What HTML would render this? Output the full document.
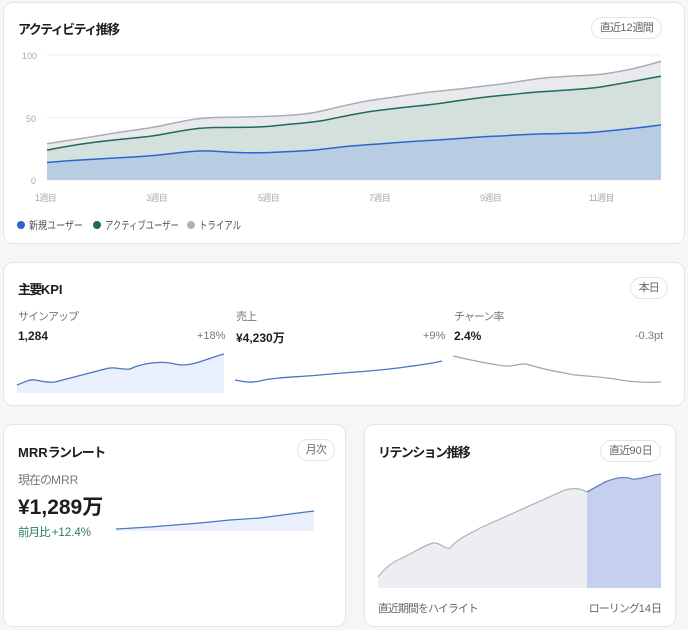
<!DOCTYPE html>
<html><head><meta charset="utf-8"><style>
*{box-sizing:border-box;margin:0;padding:0}
body{width:688px;height:630px;background:#f6f6f7;font-family:"Liberation Sans","Noto Sans CJK JP",sans-serif;color:#1d1d1f;position:relative;overflow:hidden}
.card{position:absolute;background:#fff;border:1px solid #e6e6ea;border-radius:10px}
.t{position:absolute;font-size:13px;font-weight:bold;color:#1d1d1f;letter-spacing:-1.6px;white-space:nowrap}
.pill{position:absolute;border:1px solid #e4e4e8;border-radius:11px;font-size:11px;color:#666;height:22px;line-height:20px;padding:0 8px;background:#fff;letter-spacing:-0.8px;white-space:nowrap}
.s{position:absolute;font-size:11px;color:#777;letter-spacing:-1px;white-space:nowrap}
.v{position:absolute;font-size:12px;font-weight:bold;white-space:nowrap}
.l{letter-spacing:0}
svg{position:absolute}
</style></head><body>
<div class="card" style="left:3px;top:2px;width:682px;height:242px">
<div class="t" style="left:14px;top:16px">アクティビティ推移</div>
<div class="pill" style="right:22px;top:14px">直近<span class="l">12</span>週間</div>
</div>
<svg style="left:0;top:0" width="688" height="240">
<g font-size="9" fill="#aaa" font-family="Liberation Sans,Noto Sans CJK JP,sans-serif">
<line x1="47" y1="55" x2="661" y2="55" stroke="#eee"/><line x1="47" y1="117.5" x2="661" y2="117.5" stroke="#eee"/><line x1="47" y1="180" x2="661" y2="180" stroke="#eee"/>
<text x="22" y="59">100</text><text x="26" y="122">50</text><text x="31" y="184">0</text>
<g letter-spacing="-0.6"><text x="35" y="201">1週目</text><text x="146" y="201">3週目</text><text x="258" y="201">5週目</text><text x="369" y="201">7週目</text><text x="480" y="201">9週目</text><text x="589" y="201">11週目</text></g>
</g>
<path d="M47,143.75 C75,139 80,139 102.8,135 C130,130 140,130 158.6,126.25 C185,121 195,118 214.4,117.5 C245,117 250,117 270.2,116.25 C300,115 310,114 326,110 C355,103 365,101 381.8,98.75 C415,94 420,93 437.6,91.25 C470,88 475,87 493.4,85 C520,82 530,79 549.2,77.5 C580,75 590,76 605,73.75 C630,70 645,66 661,61.25 L661,180 47,180Z" fill="#e8eaee"/>
<path d="M47,143.75 C75,139 80,139 102.8,135 C130,130 140,130 158.6,126.25 C185,121 195,118 214.4,117.5 C245,117 250,117 270.2,116.25 C300,115 310,114 326,110 C355,103 365,101 381.8,98.75 C415,94 420,93 437.6,91.25 C470,88 475,87 493.4,85 C520,82 530,79 549.2,77.5 C580,75 590,76 605,73.75 C630,70 645,66 661,61.25" fill="none" stroke="#aaadb5" stroke-width="1.5"/>
<path d="M47,150 C75,145 80,144 102.8,141.25 C130,138 140,138 158.6,135 C185,130 195,128 214.4,127.5 C245,127 250,128 270.2,126.25 C300,123 310,123 326,120 C355,114 365,112 381.8,110 C415,106 420,106 437.6,103.75 C470,99 475,98 493.4,96.25 C520,94 530,92 549.2,91.25 C580,89 590,89 605,86.25 C630,82 645,79 661,76.25 L661,180 47,180Z" fill="#d3e0dc"/>
<path d="M47,150 C75,145 80,144 102.8,141.25 C130,138 140,138 158.6,135 C185,130 195,128 214.4,127.5 C245,127 250,128 270.2,126.25 C300,123 310,123 326,120 C355,114 365,112 381.8,110 C415,106 420,106 437.6,103.75 C470,99 475,98 493.4,96.25 C520,94 530,92 549.2,91.25 C580,89 590,89 605,86.25 C630,82 645,79 661,76.25" fill="none" stroke="#1f6b55" stroke-width="1.5"/>
<path d="M47,162.5 C75,160 80,160 102.8,158.75 C130,157 140,157 158.6,155 C185,152 200,150 214.4,151.25 C240,153 250,153 270.2,152.5 C300,151 310,151 326,148.75 C355,145 365,145 381.8,143.75 C415,141 420,141 437.6,140 C470,138 475,137 493.4,136.25 C520,135 530,134 549.2,133.75 C580,133 590,133 605,131.25 C630,129 645,127 661,125 L661,180 47,180Z" fill="#b8cce2"/>
<path d="M47,162.5 C75,160 80,160 102.8,158.75 C130,157 140,157 158.6,155 C185,152 200,150 214.4,151.25 C240,153 250,153 270.2,152.5 C300,151 310,151 326,148.75 C355,145 365,145 381.8,143.75 C415,141 420,141 437.6,140 C470,138 475,137 493.4,136.25 C520,135 530,134 549.2,133.75 C580,133 590,133 605,131.25 C630,129 645,127 661,125" fill="none" stroke="#2c64d0" stroke-width="1.5"/>
<g font-size="11" fill="#555" font-family="Liberation Sans,Noto Sans CJK JP,sans-serif">
<circle cx="21" cy="225" r="4" fill="#2c64d0"/><text x="29" y="229" textLength="54" lengthAdjust="spacingAndGlyphs">新規ユーザー</text>
<circle cx="97" cy="225" r="4" fill="#1f6b55"/><text x="105" y="229" textLength="74" lengthAdjust="spacingAndGlyphs">アクティブユーザー</text>
<circle cx="191" cy="225" r="4" fill="#b0b0b8"/><text x="199" y="229" textLength="42" lengthAdjust="spacingAndGlyphs">トライアル</text>
</g>
</svg>

<div class="card" style="left:3px;top:262px;width:682px;height:144px">
<div class="t" style="left:14px;top:16px">主要<span class="l">KPI</span></div>
<div class="pill" style="right:16px;top:14px">本日</div>
<div class="s" style="left:14px;top:45px">サインアップ</div>
<div class="v" style="left:14px;top:66px">1,284</div>
<div class="s l" style="left:193px;top:67px">+18%</div>
<div class="s" style="left:232px;top:45px">売上</div>
<div class="v" style="left:232px;top:66px">¥4,230万</div>
<div class="s l" style="left:419px;top:67px">+9%</div>
<div class="s" style="left:450px;top:45px">チャーン率</div>
<div class="v" style="left:450px;top:66px">2.4%</div>
<div class="s l" style="left:631px;top:67px">-0.3pt</div>
</div>
<svg style="left:0;top:340px" width="688" height="60">
<path d="M17,45 C25,42 30,39 35,40 C42,41 48,43 55,42 C70,38 90,33 105,29 C115,26 120,30 130,29 C140,24 160,20 175,24 C190,28 205,19 224,14 L224,53 17,53Z" fill="#e9f0fb"/>
<path d="M17,45 C25,42 30,39 35,40 C42,41 48,43 55,42 C70,38 90,33 105,29 C115,26 120,30 130,29 C140,24 160,20 175,24 C190,28 205,19 224,14" fill="none" stroke="#4a74c4" stroke-width="1.3"/>
<path d="M235,40 C245,42 250,43 260,41 C275,37 300,37 320,35 C350,32 380,31 405,27 C420,25 430,24 442,21" fill="none" stroke="#4a74c4" stroke-width="1.3"/>
<path d="M453,16 C470,20 490,24 505,26 C515,27 520,22 530,25 C545,30 560,32 575,35 C590,36 600,37 615,39 C630,42 650,43 661,42" fill="none" stroke="#a6a6ab" stroke-width="1.3"/>
</svg>

<div class="card" style="left:3px;top:424px;width:343px;height:203px">
<div class="t" style="left:14px;top:17px"><span class="l">MRR</span>ランレート</div>
<div class="pill" style="right:10px;top:14px">月次</div>
<div class="s" style="left:14px;top:46px;font-size:12px">現在の<span class="l">MRR</span></div>
<div class="v" style="left:14px;top:66px;font-size:21px">¥1,289万</div>
<div class="s" style="left:14px;top:99px;color:#2a7a5c;font-size:11.5px">前月比 <span class="l">+12.4%</span></div>
</div>
<svg style="left:0;top:505px" width="340" height="30">
<path d="M116,24 L150,22 200,18 230,15 260,13 290,9 314,6 L314,26 116,26Z" fill="#e9f0fb"/>
<path d="M116,24 L150,22 200,18 230,15 260,13 290,9 314,6" fill="none" stroke="#4a74c4" stroke-width="1.2"/>
</svg>

<div class="card" style="left:364px;top:424px;width:312px;height:203px">
<div class="t" style="left:13px;top:17px">リテンション推移</div>
<div class="pill" style="right:14px;top:15px">直近<span class="l">90</span>日</div>
<div class="s" style="left:13px;top:175px;color:#666">直近期間をハイライト</div>
<div class="s" style="right:14px;top:175px;color:#666">ローリング<span class="l">14</span>日</div>
</div>
<svg style="left:0;top:470px" width="688" height="125">
<path d="M378,107 C385,98 392,92 400,89 C415,82 425,75 433,73 C440,72 445,80 450,78 C458,68 470,64 480,58 L565,20 C572,18 580,18 587,22 L587,118 378,118Z" fill="#eceef1"/>
<path d="M587,22 L605,12 C615,8 625,6 632,9 C640,10 650,5 661,4 L661,118 587,118Z" fill="#c5d0ee"/>
<path d="M378,107 C385,98 392,92 400,89 C415,82 425,75 433,73 C440,72 445,80 450,78 C458,68 470,64 480,58 L565,20 C572,18 580,18 587,22" fill="none" stroke="#b0b0b6" stroke-width="1.2"/>
<path d="M587,22 L605,12 C615,8 625,6 632,9 C640,10 650,5 661,4" fill="none" stroke="#6c80c4" stroke-width="1.3"/>
</svg>
</body></html>
